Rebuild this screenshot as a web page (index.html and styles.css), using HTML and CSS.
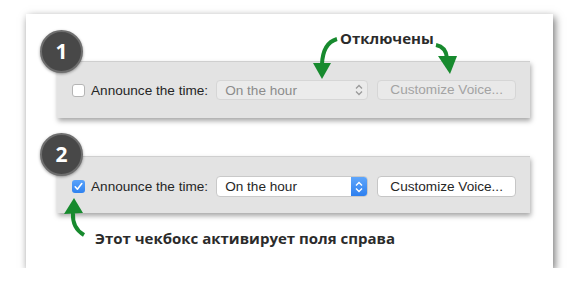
FILE: index.html
```html
<!DOCTYPE html>
<html lang="ru">
<head>
    <meta charset="UTF-8">
    <meta name="viewport" content="width=device-width, initial-scale=1.0">
    <title>Announce the time</title>
    <link rel="stylesheet" href="styles.css">
</head>
<body>
    <div class="card">
        <div class="panel">
            <div class="step step-one">1</div>
            <div class="row">
                <span class="check"></span>
                <span class="label">Announce the time:</span>
                <div class="select disabled">
                    <span class="select-text">On the hour</span>
                    <span class="select-arrows">
                        <svg width="8" height="12" viewBox="0 0 8 12"><path d="M1 4.5 L4 1.5 L7 4.5 M1 7.5 L4 10.5 L7 7.5" fill="none" stroke="#9a9a9a" stroke-width="1.3"/></svg>
                    </span>
                </div>
                <div class="button disabled">Customize Voice...</div>
            </div>
        </div>

        <div class="panel panel-two">
            <div class="step step-two">2</div>
            <div class="row">
                <span class="check checked">
                    <svg width="13" height="13" viewBox="0 0 13 13"><path d="M3.2 6.8 L5.4 9.2 L9.8 3.6" fill="none" stroke="#fff" stroke-width="1.6" stroke-linecap="round" stroke-linejoin="round"/></svg>
                </span>
                <span class="label">Announce the time:</span>
                <div class="select">
                    <span class="select-text">On the hour</span>
                    <span class="select-arrows active">
                        <svg width="8" height="12" viewBox="0 0 8 12"><path d="M1 4.5 L4 1.5 L7 4.5 M1 7.5 L4 10.5 L7 7.5" fill="none" stroke="#fff" stroke-width="1.4"/></svg>
                    </span>
                </div>
                <div class="button">Customize Voice...</div>
            </div>
        </div>

        <p class="caption">Этот чекбокс активирует поля справа</p>

        <span class="note">Отключены</span>
        <svg class="arrows" width="527" height="254" viewBox="0 0 527 254">
            <path d="M311 25 Q297 29 296 50" fill="none" stroke="#178a2e" stroke-width="4"/>
            <polygon points="287,49 305,49 296,65" fill="#178a2e"/>
            <path d="M410 31 Q420 33 421 44" fill="none" stroke="#178a2e" stroke-width="4"/>
            <polygon points="412,42 431,42 424,60" fill="#178a2e"/>
            <path d="M58 221 Q46 214 47 199" fill="none" stroke="#178a2e" stroke-width="4"/>
            <polygon points="38,200 57,199 48,184" fill="#178a2e"/>
        </svg>
    </div>
</body>
</html>
```

FILE: styles.css
```css
body {
    margin: 0;
    background: #fff;
    font-family: "Liberation Sans", Arial, sans-serif;
}

.card {
    position: relative;
    box-sizing: border-box;
    width: 527px;
    height: 254px;
    margin: 14px 0 0 26px;
    padding: 47px 23px 0 31px;
    background: #fff;
    box-shadow: 2px 3px 8px rgba(0, 0, 0, 0.55);
}

.panel {
    position: relative;
    display: flex;
    align-items: center;
    height: 57px;
    padding-left: 15px;
    background: #e3e3e3;
    border-top: 1px solid #cfcfcf;
    box-sizing: border-box;
    box-shadow: 1px 3px 5px rgba(0, 0, 0, 0.35);
}

.panel-two {
    margin-top: 38px;
    padding-top: 3px;
}

.step {
    position: absolute;
    left: -17px;
    width: 39px;
    height: 39px;
    border: 2px solid #6e6e6e;
    border-radius: 50%;
    background: #484848;
    color: #fff;
    font-family: "Open Sans", sans-serif;
    font-weight: 700;
    font-size: 21px;
    line-height: 39px;
    text-align: center;
    box-shadow: 0 1px 3px rgba(0, 0, 0, 0.4);
}

.step-one {
    top: -32px;
}

.step-two {
    top: -24px;
}

.row {
    display: flex;
    align-items: center;
    font-size: 13.6px;
    color: #262626;
}

.check {
    display: flex;
    width: 13px;
    height: 13px;
    box-sizing: border-box;
    border: 1px solid #b5b5b5;
    border-radius: 3px;
    background: #fff;
}

.check.checked {
    border: none;
    background: linear-gradient(#5aa3fa, #2f82f0);
}

.label {
    margin-left: 6px;
}

.select {
    display: flex;
    align-items: center;
    justify-content: space-between;
    box-sizing: border-box;
    width: 152px;
    height: 21px;
    margin-left: 8px;
    border: 1px solid #c9c9c9;
    border-radius: 4px;
    background: #fff;
    overflow: hidden;
}

.select.disabled {
    height: 20px;
    border-color: #d6d6d6;
    background: #ebebeb;
    color: #8c8c8c;
}

.select-text {
    padding-left: 8px;
}

.select-arrows {
    display: flex;
    align-items: center;
    justify-content: center;
    width: 16px;
    height: 100%;
}

.select-arrows.active {
    background: linear-gradient(#5fa6fb, #2d7fef);
}

.button {
    box-sizing: border-box;
    width: 139px;
    height: 21px;
    margin-left: 9px;
    border: 1px solid #c6c6c6;
    border-radius: 4px;
    background: #fff;
    text-align: center;
    line-height: 19px;
}

.button.disabled {
    height: 20px;
    border-color: #d6d6d6;
    background: #e9e9e9;
    color: #a3a3a3;
    line-height: 18px;
}

.caption {
    margin: 15px 0 0 38px;
    font-family: "Open Sans", sans-serif;
    font-weight: 700;
    font-size: 15px;
    line-height: 20px;
    color: #2b2b2b;
}

.note {
    position: absolute;
    left: 314px;
    top: 14px;
    font-family: "Open Sans", sans-serif;
    font-weight: 700;
    font-size: 15px;
    line-height: 20px;
    color: #2b2b2b;
}

.arrows {
    position: absolute;
    left: 0;
    top: 0;
}
```
